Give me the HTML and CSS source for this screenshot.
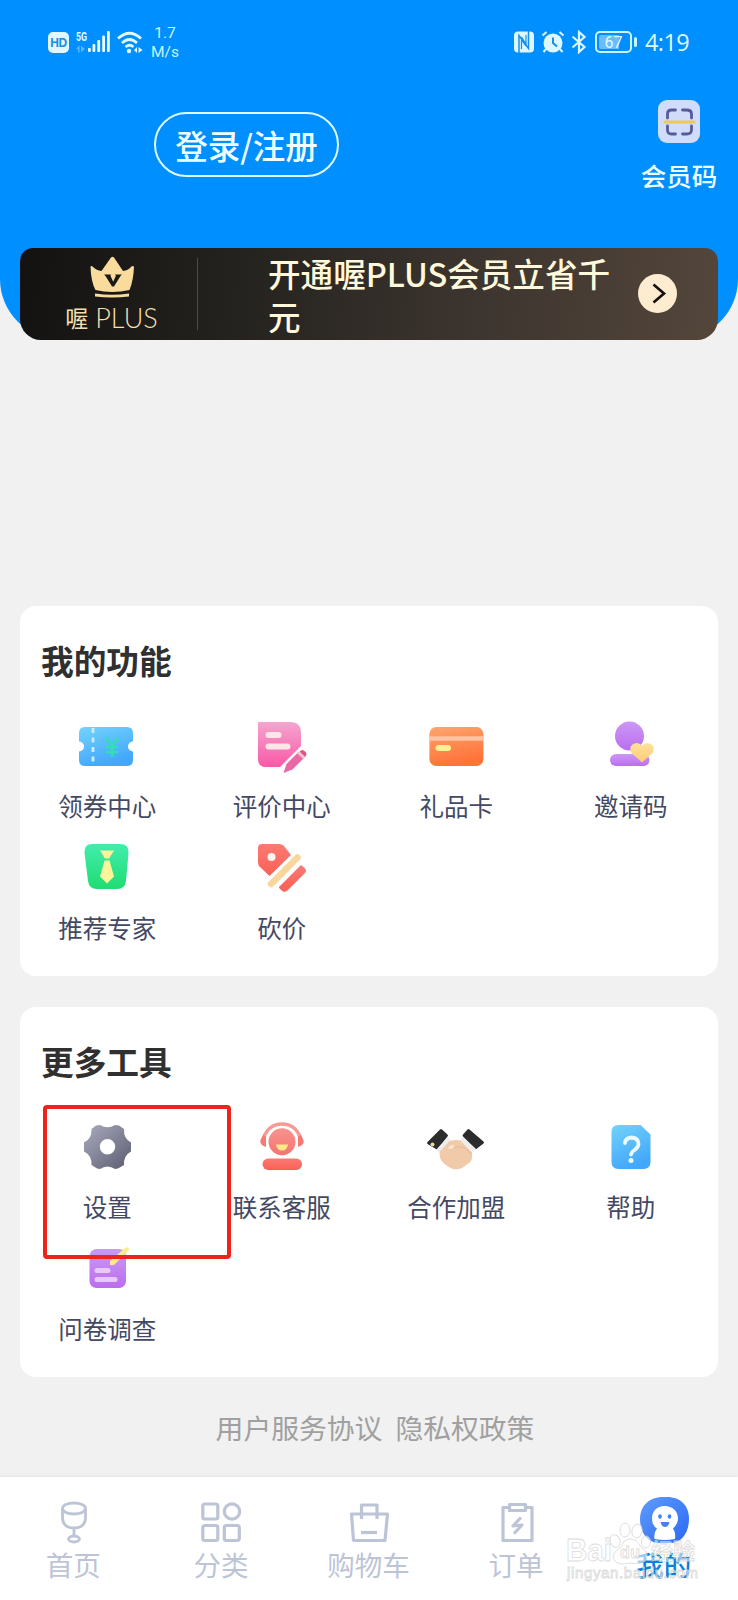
FILE: index.html
```html
<!DOCTYPE html>
<html lang="zh-CN">
<head>
<meta charset="utf-8">
<title>我的</title>
<link rel="stylesheet" href="styles.css">
</head>
<body>
<svg class="defs" width="0" height="0" aria-hidden="true">
  <defs>
    <linearGradient id="blue" x1="0" y1="0" x2=".4" y2="1"><stop offset="0" stop-color="#72d3fb"/><stop offset="1" stop-color="#43a7fb"/></linearGradient>
    <linearGradient id="pink" x1="0" y1="0" x2="0" y2="1"><stop offset="0" stop-color="#f3a6cf"/><stop offset="1" stop-color="#fb58a8"/></linearGradient>
    <linearGradient id="orange" x1="0" y1="0" x2=".3" y2="1"><stop offset="0" stop-color="#fca66e"/><stop offset="1" stop-color="#ff7338"/></linearGradient>
    <linearGradient id="purple" x1="0" y1="0" x2="0" y2="1"><stop offset="0" stop-color="#cc97f8"/><stop offset="1" stop-color="#bb6eee"/></linearGradient>
    <linearGradient id="gold" x1="0" y1="0" x2="0" y2="1"><stop offset="0" stop-color="#fde29b"/><stop offset="1" stop-color="#fdcb75"/></linearGradient>
    <linearGradient id="green" x1="0" y1="0" x2="0" y2="1"><stop offset="0" stop-color="#42edac"/><stop offset="1" stop-color="#20dc72"/></linearGradient>
    <linearGradient id="red" x1="0" y1="0" x2="0" y2="1"><stop offset="0" stop-color="#fb7a72"/><stop offset="1" stop-color="#f96057"/></linearGradient>
    <linearGradient id="rose" x1="0" y1="0" x2="0" y2="1"><stop offset="0" stop-color="#f9938f"/><stop offset="1" stop-color="#f57571"/></linearGradient>
    <linearGradient id="gray" x1="0" y1="0" x2="1" y2="1"><stop offset="0" stop-color="#aaabbe"/><stop offset="1" stop-color="#5b5c70"/></linearGradient>
    <linearGradient id="royal" x1="0" y1="0" x2="1" y2="1"><stop offset="0" stop-color="#5f9cfb"/><stop offset="1" stop-color="#2b68f5"/></linearGradient>
  </defs>
</svg>

<div class="page">
  <header class="hero">
    <div class="status">
      <div class="status-left">
        <span class="hd">HD</span>
        <svg class="signal" width="35" height="22" viewBox="0 0 35 22">
          <g fill="#e8fbff"><rect x="12" y="17" width="2.800" height="4" rx="1"/><rect x="16.500" y="13" width="2.800" height="8" rx="1"/><rect x="21.300" y="9" width="2.800" height="12" rx="1"/><rect x="26.200" y="4.500" width="2.800" height="16.500" rx="1"/><rect x="31" y="0" width="2.800" height="21" rx="1"/></g>
          <g fill="#58b7ff"><path d="M0 18l3.500-4v7.500h-1.500v-3.500zM5 14.500l4 3.500-4 3.500z"/></g>
          <text class="fiveg" x="0" y="9.500" textLength="11" lengthAdjust="spacingAndGlyphs">5G</text>
        </svg>
        <svg class="wifi" width="26" height="23" viewBox="0 0 26 23">
          <g fill="none" stroke="#e0faff" stroke-width="2.700"><path d="M1 7.500Q12.500-3 24 7.500"/><path d="M5 12Q12.500 5 20 12"/><path d="M8.500 16q4-3.500 8 0"/></g>
          <circle cx="12" cy="20" r="2.200" fill="#e0faff"/><path d="M17 19l3-3v6zM21.500 16l4 3-4 3z" fill="#e0faff"/>
        </svg>
        <span class="speed">1.7<br>M/s</span>
      </div>
      <div class="status-right">
        <svg width="22" height="22" viewBox="0 0 22 22"><rect x="1" y=".5" width="20" height="21" rx="4" fill="#ddf7ff"/><path d="M6 22V4.500l9.500 13V0" fill="none" stroke="#168ff0" stroke-width="1.500"/><path d="M8.500 18V9l4.500 6M13 4v9L8.500 6" fill="none" stroke="#168ff0" stroke-width="1.200"/></svg>
        <svg width="24" height="22" viewBox="0 0 24 22"><circle cx="12" cy="12" r="9.500" fill="#ddf7ff"/><path d="M1.500 4.500l4-3.500M18.500 1l4 3.500M5 18l-2.500 3M19 18l2.500 3" stroke="#ddf7ff" stroke-width="2"/><path d="M12 6.500V12l4 3.500" fill="none" stroke="#168ff0" stroke-width="2"/></svg>
        <svg width="16" height="24" viewBox="0 0 16 24"><path d="M1.500 6.500l12 10.500-5.500 5V2l5.500 5L1.500 17.500" fill="none" stroke="#ddf7ff" stroke-width="2.200"/></svg>
        <span class="battery"><span class="battery-level">67</span></span>
        <span class="clock">4:19</span>
      </div>
    </div>
    <div class="account">
      <a class="login">登录/注册</a>
      <div class="member-code">
        <svg width="42" height="43" viewBox="0 0 42 43"><rect width="42" height="43" rx="9" fill="#d0dcf9"/><g fill="none" stroke="#575b9c" stroke-width="2.800" stroke-linecap="round"><path d="M9.500 18v-4q0-4 4-4h4M24.500 10h4q5 0 5 4v4M9.500 26v4q0 4 4 4h4M24.500 34h4q5 0 5-4v-4"/></g><path d="M7 22h29" stroke="#ecc75d" stroke-width="3.200" stroke-linecap="round"/></svg>
        <span>会员码</span>
      </div>
    </div>
  </header>

  <section class="plus">
    <div class="plus-brand">
      <svg width="46" height="42" viewBox="0 0 46 42"><path d="M1.500 10.500q1-1 2 0 4 4 9 4.500L22 1.500q1.500-1.500 3 0L34 15q5-.5 8.500-4.500 1-1 2.500 0-.5 14-4.500 23.500Q23 38 6.500 34 2 26 1.500 10.500z" fill="#f9dc9b"/><path d="M6 37.500q17 2.500 34 0v3q-17 2-34 0z" fill="#f9dc9b"/><path d="M15 18.500h7l-.5 1.200 2.700 6 2.700-6-1-1.200H33l-1.500 1.500L25 30.500h-2l-6.500-10.500z" fill="#1b1918"/></svg>
      <div class="plus-name"><span>喔</span><span class="plus-word">PLUS</span></div>
    </div>
    <p class="plus-text">开通喔PLUS会员立省千元</p>
    <svg class="plus-go" width="39" height="39" viewBox="0 0 39 39"><circle cx="19.500" cy="19.500" r="19.500" fill="#feecd0"/><path d="M15.500 10.500l10.500 9-10.500 9" fill="none" stroke="#16110e" stroke-width="2.700"/></svg>
  </section>

  <section class="card">
    <h2 class="card-title">我的功能</h2>
    <div class="grid">
      <div class="item"><svg class="icon" viewBox="0 0 60 60"><path d="M8 10h42q6 0 6 6v8.500a5 5 0 0 0 0 10V43q0 6-6 6H8q-6 0-6-6v-8.500a5 5 0 0 0 0-10V16q0-6 6-6z" fill="url(#blue)"/><path d="M16 11v38" stroke="#caeeff" stroke-width="2.800" stroke-dasharray="5 4.500"/><path d="M29 20.500l6 8.500 6-8.500M35 28v12M29 30h12M29 35h12" fill="none" stroke="#30dfb4" stroke-width="2.600"/></svg><span>领券中心</span></div>
      <div class="item"><svg class="icon" viewBox="0 0 60 60"><path d="M7 5h32q11 0 11 11v13L29 50H15q-8 0-8-8z" fill="url(#pink)"/><path d="M17.500 18h10M17.500 29.500h19" stroke="#fde5e8" stroke-width="6" stroke-linecap="round"/><path d="M32.500 56l3-9L47.500 35l6 5.500-12 12z" fill="#e968a5"/><path d="M48.500 34.500q3-3 5.500 0 3 2.500 0 5.500z" fill="#dc5189"/><path d="M47 35.500l6 5.500" stroke="#fbbfc4" stroke-width="2.500"/></svg><span>评价中心</span></div>
      <div class="item"><svg class="icon" viewBox="0 0 60 60"><rect x="3.400" y="10" width="54" height="39" rx="7" fill="url(#orange)"/><path d="M3.400 21.500h54" stroke="#fdc3a2" stroke-width="4.500"/><path d="M12.500 31h9.500" stroke="#ffef95" stroke-width="6" stroke-linecap="round"/></svg><span>礼品卡</span></div>
      <div class="item"><svg class="icon" viewBox="0 0 60 60"><circle cx="29.500" cy="19" r="14.500" fill="url(#purple)"/><rect x="10" y="37" width="39.500" height="12" rx="6" fill="url(#purple)"/><path d="M42 45.500L31.500 36q-3-5 1-8.500 5-3.500 9.500 1 4.500-4.500 9.500-1 4 3.500 1 8.500z" fill="url(#gold)"/></svg><span>邀请码</span></div>
      <div class="item"><svg class="icon" viewBox="0 0 60 60"><path d="M15 5h28q9 0 8.500 9L49 42q-1 8-9 8H20q-8 0-9-8L7.500 14Q7 5 15 5z" fill="url(#green)"/><path d="M23 11.500h14l-5 8h-4zM27.500 21.500h5l4.500 16-7 7-7-7z" fill="#fbf59a"/></svg><span>推荐专家</span></div>
      <div class="item"><svg class="icon" viewBox="0 0 60 60"><path d="M11 5h17q3 0 5 2l7 9-21.500 21L8.500 27.500Q7 26 7 23V9q0-4 4-4z" fill="url(#red)"/><circle cx="20.500" cy="18" r="4" fill="#fff6f2"/><path d="M20 45l26.500-26.500" stroke="#fbd59a" stroke-width="6.500" stroke-linecap="round"/><path d="M29 47q-2 1 0 3l3 2.500q2.500 1 5.500-2l16-16q3-3 0-5.500L50 26z" fill="url(#red)"/></svg><span>砍价</span></div>
    </div>
  </section>

  <section class="card card-tools">
    <h2 class="card-title">更多工具</h2>
    <div class="grid">
      <div class="item"><svg class="icon" viewBox="0 0 60 60"><path fill-rule="evenodd" d="M19 7.500l4-.5q7.500 4.500 15 0l4 .5 5 3.500q-.5 10 7 13.500v9q-7.500 4-7 13.500l-6 3.500-3 .5q-7.500-5-15 0l-3-.5-5.500-3.500Q15 37.500 7 33.500v-9Q15 21 14.500 11zM30.500 21a7.700 7.700 0 1 0 0 15.400 7.700 7.700 0 0 0 0-15.400z" fill="url(#gray)"/></svg><span>设置</span></div>
      <div class="item"><svg class="icon" viewBox="0 0 60 60"><path d="M12.500 24C13 0 49 0 49.500 24" fill="none" stroke="#f69a96" stroke-width="3.500"/><path d="M12 17l3 1.500v10.500q-7-2-5.500-7zM50 17l-3 1.500v10.500q7-2 5.500-7z" fill="#f57a75"/><circle cx="31" cy="23.700" r="13.500" fill="url(#rose)"/><path d="M25 26.500h12q-1 6-6 6t-6-6z" fill="#ffe886"/><rect x="11.500" y="40.500" width="39.500" height="11.500" rx="5.700" fill="url(#red)"/></svg><span>联系客服</span></div>
      <div class="item"><svg class="icon" viewBox="0 0 60 60"><path d="M14 11.500q1-1 2 0l5.500 5q1 1 0 2l-9.500 12.500q-1 1-2 0l-8.500-5q-1-1 0-2z" fill="#2c2c2c"/><path d="M43.500 11.500q-1-1-2 0l-4.500 5q-1 1 0 2l12 12q1 1 2 0l6.500-5q1-1 0-2z" fill="#2c2c2c"/><path d="M21.500 19l3 3-11 13-3.500-3zM37 19l-3 3 13 12 3-3z" fill="#ededed"/><path d="M13.500 34l10-11q6-1.500 11-.5l11.500 11.500v5q0 4-3 6L36 50q-4 2-9 1-10-4-13-11z" fill="#f0caa9"/><path d="M28 30q4-2 7-1 6 1 9.500 7" fill="none" stroke="#e3ba98" stroke-width="1"/><path d="M22 30q3-4 6-3 0 4-4 4z" fill="#fbe5cd"/><circle cx="6.500" cy="26.500" r="2" fill="#f1da96"/></svg><span>合作加盟</span></div>
      <div class="item"><svg class="icon" viewBox="0 0 60 60"><path d="M18.500 7h22l10 9.500V44q0 7-7 7h-25q-7 0-7-7V14q0-7 7-7z" fill="url(#blue)"/><path d="M25 25q.5-5 6.500-5.500 7 .5 7 6.500 0 3-4 6-3 2-3.500 4.500" fill="none" stroke="#ebfaff" stroke-width="3.800" stroke-linecap="round"/><circle cx="31" cy="42.500" r="2.500" fill="#ebfaff"/></svg><span>帮助</span></div>
      <div class="item"><svg class="icon" viewBox="0 0 60 60"><rect x="12.500" y="9" width="36.500" height="39" rx="7" fill="url(#purple)"/><path d="M20 30.500h11M20 39.500h18" stroke="#e9c9fd" stroke-width="5" stroke-linecap="round"/><path d="M33 25v-4L48 8q4-2 4 2L37 25z" fill="#ffe98b"/></svg><span>问卷调查</span></div>
    </div>
    <div class="highlight"></div>
  </section>

  <div class="agreements"><a>用户服务协议</a><a>隐私权政策</a></div>

  <nav class="tabs">
    <div class="tab"><svg class="tab-icon" viewBox="0 0 60 48"><g fill="none" stroke="currentColor" stroke-width="2.800"><path d="M18.500 12v8q0 11 11.500 11t11.500-11v-8"/><ellipse cx="30" cy="11.500" rx="11.500" ry="5.500"/><path d="M30 31v7"/><ellipse cx="30" cy="42" rx="5.500" ry="3"/></g></svg><span>首页</span></div>
    <div class="tab"><svg class="tab-icon" viewBox="0 0 60 48"><g fill="none" stroke="currentColor" stroke-width="3.200"><rect x="11.800" y="7" width="15" height="15" rx="2"/><circle cx="41" cy="14.500" r="7.700"/><rect x="11.800" y="28.500" width="15" height="15" rx="2"/><rect x="33.300" y="28.500" width="15" height="15" rx="2"/></g></svg><span>分类</span></div>
    <div class="tab"><svg class="tab-icon" viewBox="0 0 60 48"><g fill="none" stroke="currentColor" stroke-width="3.200"><path d="M22.500 22V8h15.500v14M12.500 17h36l-2.500 26.500H14.500z" stroke-linejoin="round"/><path d="M22 35.500h16"/></g></svg><span>购物车</span></div>
    <div class="tab"><svg class="tab-icon" viewBox="0 0 60 48"><g fill="none" stroke="currentColor" stroke-width="3.200" stroke-linejoin="round"><path d="M22.500 10.500H16V43.500h29V10.500h-6.500"/><rect x="22.500" y="7.500" width="16" height="6"/><path d="M33 21.500l-7 7.500 9-1-7 7.500" stroke-linecap="round"/></g></svg><span>订单</span></div>
    <div class="tab tab-active"><svg class="tab-icon" viewBox="0 0 60 48"><path d="M29 0h4c14 0 22 9 22 22 0 14-8 24-18 24H25C14 46 6 36 6 22 6 9 15 0 29 0z" fill="url(#royal)"/><path d="M30.500 9c8 0 13.500 5 13.500 12.500 0 4-2.500 8-5 10q3 4 2 10.500-10 2-20.500 0-1-6.500 2.500-10.500-5-3-5-10C18 14 23 9 30.500 9z" fill="#fff"/><ellipse cx="26" cy="19.500" rx="1.800" ry="2.200" fill="#4582f8"/><ellipse cx="35.500" cy="19.500" rx="1.800" ry="2.200" fill="#4582f8"/><path d="M26.500 25h9q-1 5-4.500 5t-4.500-5z" fill="#4582f8"/></svg><span>我的</span>
    </div>
    <svg class="watermark" width="140" height="66" viewBox="0 0 140 66">
      <g fill="#fff" fill-opacity=".7" stroke="#d9d9d9" stroke-width="1"><ellipse cx="51" cy="22" rx="5" ry="6.500" transform="rotate(-20 51 22)"/><ellipse cx="61" cy="11" rx="5" ry="7"/><ellipse cx="73" cy="12" rx="5" ry="7" transform="rotate(12 73 12)"/><ellipse cx="82" cy="23" rx="4.500" ry="6"/><path d="M66 20q7 0 11 8 9 6 5 13-4 5-16 3-12 3-16-3-3-7 7-13 3-8 9-8z"/></g>
      <text class="wm-latin" x="2" y="42" textLength="46" lengthAdjust="spacingAndGlyphs">Bai</text><text class="wm-du" x="56" y="39" textLength="20">du</text><text class="wm-cjk" x="87" y="40" textLength="44">经验</text>
      <text class="wm-url" x="3" y="59" textLength="131">jingyan.baidu.com</text>
    </svg>
  </nav>
</div>
</body>
</html>
```

FILE: styles.css
```css
* { box-sizing: border-box; }
body { margin: 0; background: #f1f1f1; font-family: "Noto Sans CJK SC", sans-serif; }
.defs { position: absolute; }
svg { display: block; flex: none; }
.page { width: 738px; height: 1600px; display: flex; flex-direction: column; overflow: hidden; }

.hero { height: 339px; flex: none; background: #008fff; border-radius: 0 0 60px 60px; color: #effeff; }
.status { height: 84px; padding: 0 49px 0 48px; display: flex; justify-content: space-between; }
.status-left { display: flex; padding-top: 31px; }
.hd { width: 21px; height: 21px; margin-top: 1px; border-radius: 5px; background: #e0f7ff; color: #168de8; font: bold 12px/22px "Liberation Sans", sans-serif; text-align: center; letter-spacing: -0.5px; }
.signal { margin-left: 7px; }
.fiveg { font: bold 12px Roboto, sans-serif; fill: #e0fbff; }
.wifi { margin-left: 6px; }
.speed { margin: -8px 0 0 8px; padding-top: 1px; color: #c9f6ff; font: 15.500px/18.500px Roboto, sans-serif; text-align: center; }
.status-right { display: flex; align-items: center; height: 84px; color: #dffaff; gap: 6px; }
.battery { position: relative; width: 37px; height: 22px; padding: 2px; border: 2px solid #c8f4ff; border-radius: 5px; margin-left: 2px; }
.battery::after { content: ""; position: absolute; right: -7px; top: 4px; width: 3px; height: 10px; border-radius: 2px; background: #c8f4ff; }
.battery-level { display: block; height: 14px; background: linear-gradient(90deg, #6bbcff 70%, transparent 70%); border-radius: 2px; font: 16px/15px Roboto, sans-serif; text-align: center; }
.clock { margin-left: 7px; font: 23.500px/28px "Open Sans", sans-serif; letter-spacing: -0.6px; width: 44px; white-space: nowrap; }

.account { display: flex; justify-content: space-between; padding: 16px 21px 0 154px; }
.login { width: 185px; height: 65px; margin-top: 12px; border: 2px solid #defcff; border-radius: 33px; font-size: 32.500px; font-weight: 500; line-height: 61px; text-align: center; white-space: nowrap; }
.member-code { display: flex; flex-direction: column; align-items: center; width: 76px; font-size: 25.500px; font-weight: 500; line-height: 36px; white-space: nowrap; gap: 14px; }

.plus { position: relative; display: flex; flex: none; align-items: center; width: 698px; height: 92px; margin: -91px 0 0 20px; border-radius: 13px 13px 21px 21px; background: linear-gradient(95deg, #131211 0%, #25231f 32%, #39322d 60%, #54463b 100%); }
.plus-brand { display: flex; flex-direction: column; align-items: center; width: 178px; height: 72px; border-right: 1px solid #4d4a47; }
.plus-brand svg { margin: -2px 0 0 6px; }
.plus-name { display: flex; align-items: center; gap: 7px; margin-left: 6px; color: #f5dfad; font-size: 23px; line-height: 39px; }
.plus-word { font: 300 27px/39px Lato, sans-serif; }
.plus-text { width: 350px; margin: -1px 0 0 70px; color: #fff9dc; font-size: 32.600px; font-weight: 500; line-height: 43px; }
.plus-go { margin: -1px 0 0 20px; }

.card { position: relative; flex: none; width: 698px; height: 370px; margin: 266px 0 0 20px; border-radius: 16px; background: #fff; }
.card-tools { margin-top: 31px; }
.card-title { margin: 0; height: 111px; padding: 29px 0 0 21px; color: #303030; font-size: 32.700px; line-height: 50px; font-weight: 700; }
.grid { display: grid; grid-template-columns: repeat(4, 1fr); grid-auto-rows: 122px; }
.item { display: flex; flex-direction: column; align-items: center; gap: 11px; color: #444963; font-size: 24.500px; line-height: 36px; white-space: nowrap; }
.icon { width: 60px; height: 60px; margin-left: -1px; }
.highlight { position: absolute; left: 23px; top: 98px; width: 188px; height: 154px; border: 4px solid #f0231c; border-radius: 4px; }

.agreements { display: flex; flex: none; height: 100px; padding-top: 30px; justify-content: center; gap: 13px; padding-left: 12px; color: #a0a0a0; font-size: 27.800px; line-height: 40px; }
.tabs { position: relative; flex: none; display: grid; grid-template-columns: repeat(5, 1fr); height: 123px; background: #fff; box-shadow: 0 -1px 3px rgba(0,0,0,.06); }
.tab { display: flex; flex-direction: column; align-items: center; padding-top: 20px; color: #bdc4d6; }
.tab-icon { width: 60px; height: 48px; }
.tab span { font-size: 27.500px; line-height: 39px; margin-left: -1px; }
.tab-active span { color: #0a7fdc; font-weight: 500; }
.watermark { position: absolute; left: 564px; top: 42px; opacity: .85; }
.watermark text { fill: #fff; fill-opacity: .6; stroke: #d6d6d6; stroke-width: .8px; }
.wm-latin { font: bold 31px "Liberation Sans", sans-serif; }
.wm-du { font: bold 16px "Liberation Sans", sans-serif; }
.wm-cjk { font: bold 22px "Noto Sans CJK SC", sans-serif; }
.wm-url { font: 15px "Liberation Sans", sans-serif; }
```
